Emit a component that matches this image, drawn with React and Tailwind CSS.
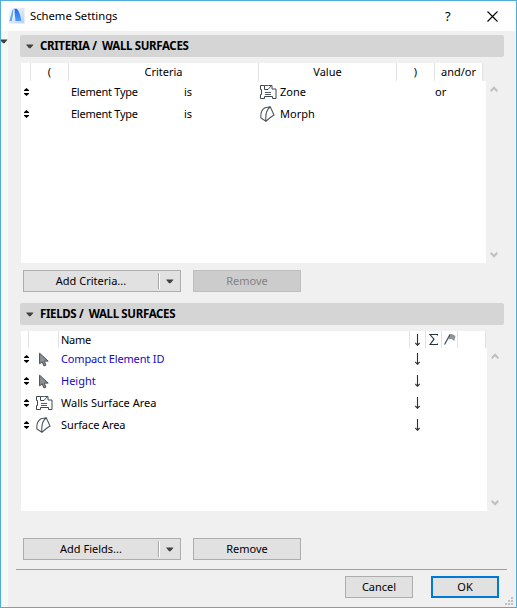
import React from "react";

const Tri = ({ className = "" }) => (
  <svg className={"block shrink-0 " + className} width="8" height="5" viewBox="0 0 8 5">
    <path d="M0.300 0.500h7v0.600L4.500 4.300h-1.400L0.300 1.100z" fill="#404040" />
  </svg>
);

const Sorter = () => (
  <svg className="block shrink-0" width="5" height="8" viewBox="0 0 5 8">
    <path d="M2.5 0L5 2.2V3H0V2.2zM0 5h5v0.8L2.5 8 0 5.8z" fill="#000" />
  </svg>
);

const ZoneIcon = () => (
  <svg className="block shrink-0" width="17" height="16" viewBox="0 0 17 16" fill="none" stroke="#3f494f">
    <path d="M0.500 1.500h4v4h3.500M8.500 1.500h3.500v3.500h4v9.500h-3.500v-2h-8v2h-4v-4h1v-5h-1v-4" />
    <path d="M4.500 1.500h4M8 5.500l3.500-4M5 8.500h6M5 10.500h6" strokeWidth="0.900" />
  </svg>
);

const MorphIcon = () => (
  <svg className="block shrink-0" width="15" height="16" viewBox="0 0 15 16" fill="none" stroke="#4a5358" strokeWidth="1.100">
    <path d="M6 15.200L0.900 12C0.500 7.500 2 3.500 5 1.800L10.300 0.800L14 9l-3.700 2.500L6 15.200C5.200 9 6.300 4 10.300 0.800" />
  </svg>
);

const CursorIcon = () => (
  <svg className="ml-[3px] block shrink-0" width="10" height="15" viewBox="0 0 10 15">
    <path d="M0.600 1.200v10.600l2.500-2 1.900 4.200 1.900-0.900-1.700-4h4z" fill="#8d9195" stroke="#454e54" />
  </svg>
);

const Arrow = () => (
  <svg className="block shrink-0" width="5" height="12" viewBox="0 0 5 12" fill="none" stroke="#263238">
    <path d="M2.500 0v11M0.300 9l2.200 2.300L4.700 9" strokeWidth="1.100" />
  </svg>
);

const Chevron = ({ down }) => (
  <svg className={down ? "block rotate-180" : "block"} width="8" height="7" viewBox="0 0 8 7" fill="none">
    <path d="M0.700 5.200L4 1.700l3.300 3.500" stroke="#bfbfbf" strokeWidth="2" />
  </svg>
);

const SectionHeader = ({ children }) => (
  <div className="flex h-[22px] w-[484px] shrink-0 items-center rounded-[2px] bg-[#d5d5d5] pl-[6px]">
    <Tri />
    <span className="ml-[6px] whitespace-pre text-[11.5px] font-bold leading-[22px] tracking-[-0.35px]">{children}</span>
  </div>
);

const HeadCell = ({ className = "", children }) => (
  <div className={"flex h-full shrink-0 items-center justify-center border-r border-[#e2e2e2] bg-white " + className}>{children}</div>
);

const SplitButton = ({ children }) => (
  <div className="flex h-[22px] w-[158px] items-center border border-[#adadad] bg-[#e1e1e1]">
    <span className="w-[134px] text-center">{children}</span>
    <div className="h-4 w-[2px] border-l border-r border-l-[#a8a8a8] border-r-white" />
    <Tri className="ml-[6px]" />
  </div>
);

const CriteriaRow = ({ icon, value, join }) => (
  <div className="flex h-[22px] items-center">
    <div className="w-[50px] shrink-0 pl-[3px]"><Sorter /></div>
    <span className="w-[113px] shrink-0 tracking-[-0.25px]">Element Type</span>
    <span className="w-[76px] shrink-0">is</span>
    <div className="flex w-5 shrink-0 justify-start">{icon}</div>
    <span className="w-[155px] shrink-0">{value}</span>
    <span>{join}</span>
  </div>
);

const FieldRow = ({ icon, name, className = "" }) => (
  <div className="flex h-[22px] items-center">
    <div className="w-[12px] shrink-0 pl-[3px]"><Sorter /></div>
    <div className="flex w-[28px] shrink-0 pl-[3px]">{icon}</div>
    <span className={"w-[354px] shrink-0 " + className}>{name}</span>
    <Arrow />
  </div>
);

const gripDots = [[6, 0], [3, 3], [6, 3], [0, 6], [3, 6], [6, 6]];

export default function App() {
  return (
    <div className="flex h-[608px] w-[517px] flex-col overflow-hidden border border-[#4fadd8] bg-[#f0f0f0] font-['Noto_Sans','Open_Sans',sans-serif] text-[11px] leading-[16px] text-black">
      <header className="flex h-[30px] shrink-0 items-center bg-white">
        <svg className="ml-2 block" width="16" height="16" viewBox="0 0 16 16">
          <defs>
            <linearGradient id="tile" x1="0" y1="0" x2="1" y2="1">
              <stop offset="0" stopColor="#f8fbff" />
              <stop offset="1" stopColor="#bfd2eb" />
            </linearGradient>
            <linearGradient id="arch" x1="0" y1="0" x2="0" y2="1">
              <stop offset="0" stopColor="#1e6de8" />
              <stop offset="1" stopColor="#4d9cff" />
            </linearGradient>
          </defs>
          <path d="M0 0h15.500v15.500H0z" fill="url(#tile)" />
          <path d="M0.500 13L3.200 2.500L5 0.800L3.300 13z" fill="#64a6f2" />
          <path d="M5.200 0.800H7.500C10 2.500 11.500 7.500 12.300 13H6.500z" fill="url(#arch)" />
          <path d="M5 1.500L3.700 13" stroke="#ffffff" strokeWidth="0.800" />
        </svg>
        <span className="ml-[5px] w-[415px] text-[11.25px]">Scheme Settings</span>
        <span className="w-[42px] text-[13px] leading-[16px]">?</span>
        <svg className="block" width="11" height="11" viewBox="0 0 11 11" stroke="#000" strokeWidth="1.100">
          <path d="M0.500 0.500l10 10M10.500 0.500l-10 10" />
        </svg>
      </header>

      <div className="flex min-h-0 flex-1">
        <div className="w-[7px] shrink-0 overflow-hidden bg-[#f7f7f7] pt-[8px]">
          <Tri className="-ml-px" />
        </div>
        <main className="flex flex-1 flex-col pt-1">
          <div className="flex flex-col pl-3">
            <SectionHeader>CRITERIA /  WALL SURFACES</SectionHeader>
            <div className="ml-px mt-[6px] flex h-[18px]">
              <HeadCell className="w-[10px]" />
              <HeadCell className="w-[38px]">(</HeadCell>
              <HeadCell className="w-[190px]">Criteria</HeadCell>
              <HeadCell className="w-[138px]">Value</HeadCell>
              <HeadCell className="w-[38px]">)</HeadCell>
              <HeadCell className="w-[48px]">and/or</HeadCell>
            </div>
            <div className="ml-px flex h-[182px]">
              <div className="w-[465px] bg-white">
                <CriteriaRow icon={<ZoneIcon />} value="Zone" join="or" />
                <CriteriaRow icon={<MorphIcon />} value="Morph" />
              </div>
              <div className="flex flex-col justify-between pb-[5px] pl-1 pt-[5px]">
                <Chevron />
                <Chevron down />
              </div>
            </div>
            <div className="ml-[3px] mt-[7px] flex gap-3">
              <SplitButton>Add Criteria...</SplitButton>
              <div className="flex h-[22px] w-[108px] items-center justify-center border border-[#bfbfbf] bg-[#cccccc] text-[#838383]">Remove</div>
            </div>

            <div className="mt-[11px]">
              <SectionHeader>FIELDS /  WALL SURFACES</SectionHeader>
            </div>
            <div className="ml-px mt-[6px] flex h-[17px]">
              <HeadCell className="w-[8px]" />
              <HeadCell className="w-[30px]" />
              <HeadCell className="w-[351px] !justify-start pl-[2px] tracking-[-0.3px]">Name</HeadCell>
              <HeadCell className="w-4"><Arrow /></HeadCell>
              <HeadCell className="w-4">
                <svg className="block" width="9" height="13" viewBox="0 0 9 13" fill="none" stroke="#263238">
                  <path d="M8.500 2.500V1.500H1l4 4.700L1 11.500h7.500v-1" strokeWidth="1.100" />
                </svg>
              </HeadCell>
              <HeadCell className="w-4">
                <svg className="block shrink-0" width="12" height="13" viewBox="0 0 12 13">
                  <path d="M5.500 1.500L8 1l3.500 2-1.200 5-3-2.200-2.800 0.700z" fill="#8e9498" />
                  <path d="M0.600 11.500L6 1.500" stroke="#40494e" strokeWidth="1.200" />
                </svg>
              </HeadCell>
              <HeadCell className="w-[28px]" />
            </div>
            <div className="ml-px flex h-[163px]">
              <div className="w-[466px] bg-white">
                <FieldRow icon={<CursorIcon />} name="Compact Element ID" className="tracking-[-0.15px] text-[#1709c4]" />
                <FieldRow icon={<CursorIcon />} name="Height" className="text-[#1709c4]" />
                <FieldRow icon={<ZoneIcon />} name="Walls Surface Area" />
                <FieldRow icon={<MorphIcon />} name="Surface Area" className="tracking-[-0.08px]" />
              </div>
              <div className="flex flex-col justify-between pb-[5px] pl-1 pt-[5px]">
                <Chevron />
                <Chevron down />
              </div>
            </div>
            <div className="ml-[3px] mt-[27px] flex gap-3">
              <SplitButton>Add Fields...</SplitButton>
              <div className="flex h-[22px] w-[108px] items-center justify-center border border-[#adadad] bg-[#e1e1e1]">Remove</div>
            </div>
          </div>

          <div className="ml-2 mt-[9px] h-px w-[491px] bg-[#a0a0a0]" />
          <div className="mt-[6px] flex">
            <div className="ml-[337px] flex h-[22px] w-[68px] items-center justify-center border border-[#adadad] bg-[#e1e1e1]">Cancel</div>
            <div className="ml-[18px] flex h-[22px] w-[68px] items-center justify-center border-2 border-[#0078d7] bg-[#e1e1e1]">OK</div>
            <svg className="ml-[6px] mt-[21px] block" width="8" height="8" viewBox="0 0 8 8" fill="#bfbfbf">
              {gripDots.map(([x, y]) => <rect key={x + "-" + y} x={x} y={y} width="2" height="2" />)}
            </svg>
          </div>
        </main>
      </div>
    </div>
  );
}
